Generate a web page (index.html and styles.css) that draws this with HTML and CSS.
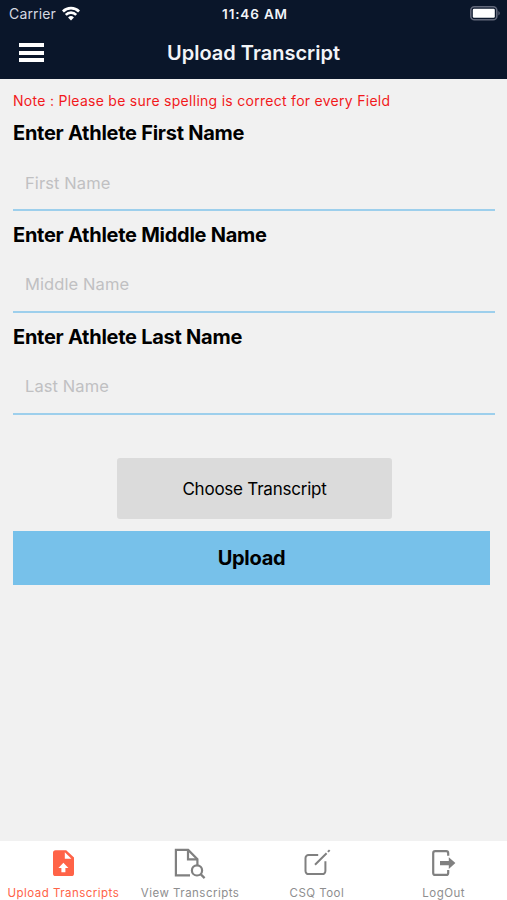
FILE: index.html
```
<!DOCTYPE html>
<html lang="en">
<head>
    <meta charset="UTF-8">
    <meta name="viewport" content="width=device-width, initial-scale=1.0">
    <title>Upload Transcript</title>
    <link rel="stylesheet" href="styles.css">
</head>
<body>
    <header>
        <div class="status-bar">
            <div class="carrier">
                <span>Carrier</span>
                <svg width="18" height="15" viewBox="0 0 19 15" fill="none" stroke="#fff" stroke-width="2.8">
                    <path d="M1 5.4a12 12 0 0 1 17 0"/>
                    <path d="M4 8.9a7.8 7.8 0 0 1 11 0"/>
                    <path d="M9.5 14.8L6.4 11.6a4.4 4.4 0 0 1 6.2 0z" fill="#fff" stroke="none"/>
                </svg>
            </div>
            <span class="time">11:46 AM</span>
            <svg class="battery" width="31" height="15" viewBox="0 0 31 15">
                <rect x=".8" y=".8" width="26" height="13" rx="3.6" fill="none" stroke="#62687a" stroke-width="1.6"/>
                <rect x="2.8" y="2.8" width="22" height="9" rx="1.2" fill="#fff"/>
                <path d="M28.4 5v4.6a2.6 2.6 0 0 0 0-4.6z" fill="#62687a"/>
            </svg>
        </div>
        <div class="nav-bar">
            <button class="menu" aria-label="Menu"><i></i><i></i><i></i></button>
            <h1>Upload Transcript</h1>
        </div>
    </header>

    <main>
        <p class="note">Note : Please be sure spelling is correct for every Field</p>

        <div class="field">
            <label for="first">Enter Athlete First Name</label>
            <input type="text" id="first" placeholder="First Name">
        </div>
        <div class="field">
            <label for="middle">Enter Athlete Middle Name</label>
            <input type="text" id="middle" placeholder="Middle Name">
        </div>
        <div class="field">
            <label for="last">Enter Athlete Last Name</label>
            <input type="text" id="last" placeholder="Last Name">
        </div>

        <button class="choose">Choose Transcript</button>
        <button class="upload">Upload</button>
    </main>

    <nav class="tabs">
        <a class="tab active">
            <svg width="32" height="32" viewBox="0 0 32 32">
                <path d="M8.6 3.2h10.6l7.8 7.4v15.8a2.6 2.6 0 0 1-2.6 2.6H8.6A2.6 2.6 0 0 1 6 26.4V5.8a2.6 2.6 0 0 1 2.6-2.6z" fill="#ff6347"/>
                <path d="M17.8 5.3v6.4h6.6z" fill="#fff"/>
                <path d="M16.4 15.8l5 5.2h-3v4.2h-4V21h-3z" fill="#fff"/>
            </svg>
            <span>Upload Transcripts</span>
        </a>
        <a class="tab">
            <svg width="32" height="32" viewBox="0 0 32 32" fill="none" stroke="#808080" stroke-width="2.2">
                <path d="M16 28.4H1.9V2.9h12.3l9.2 9.3V18"/>
                <path d="M14 3v9.4h9.4"/>
                <circle cx="23" cy="23.4" r="5.1"/>
                <path d="M26.6 27.1l4 4"/>
            </svg>
            <span>View Transcripts</span>
        </a>
        <a class="tab">
            <svg width="32" height="32" viewBox="0 0 32 32" fill="none" stroke="#808080" stroke-width="2">
                <path d="M17.2 8H7.5a3 3 0 0 0-3 3v13.1a3 3 0 0 0 3 3h13.9a3 3 0 0 0 3-3V14.2"/>
                <path d="M14 17.8L25.6 6.2M26.9 4.9l1.8-1.8"/>
            </svg>
            <span>CSQ Tool</span>
        </a>
        <a class="tab">
            <svg width="32" height="32" viewBox="0 0 32 32">
                <path d="M20.2 8.8V6.2a2 2 0 0 0-2-2H7.2a2 2 0 0 0-2 2v19.7a2 2 0 0 0 2 2h11a2 2 0 0 0 2-2v-2.8" fill="none" stroke="#808080" stroke-width="2.2"/>
                <path d="M12 13.9h8.8v-3.6l6.6 5.8-6.6 5.8v-3.6H12z" fill="#808080"/>
            </svg>
            <span>LogOut</span>
        </a>
    </nav>
</body>
</html>
```

FILE: styles.css
```
* {
    box-sizing: border-box;
}
body {
    margin: 0;
    height: 100vh;
    display: flex;
    flex-direction: column;
    background: #f1f1f1;
    font-family: Inter, "Liberation Sans", sans-serif;
    overflow: hidden;
}
header {
    height: 79px;
    background: #0a162a;
    color: #f2f4f8;
}
.status-bar {
    display: grid;
    grid-template-columns: 1fr auto 1fr;
    align-items: center;
    height: 27px;
    padding: 0 6px 0 9px;
    font-size: 14px;
}
.carrier {
    display: flex;
    align-items: center;
    gap: 6px;
    color: #d5d9e1;
    letter-spacing: 0.15px;
}
.time {
    font-weight: 600;
    font-size: 13.5px;
    letter-spacing: 0.85px;
}
.battery {
    justify-self: end;
}
.nav-bar {
    display: grid;
    grid-template-columns: 1fr auto 1fr;
    align-items: center;
    height: 51px;
    padding: 0 19px;
}
.menu {
    display: flex;
    flex-direction: column;
    gap: 3.5px;
    width: 25px;
    padding: 0;
    border: none;
    background: none;
}
.menu i {
    width: 25px;
    height: 4px;
    background: #fff;
}
h1 {
    margin: 0;
    font-size: 20px;
    font-weight: 600;
    line-height: 24px;
}
main {
    flex: 1;
    display: flex;
    flex-direction: column;
    padding: 12px 12px 0 13px;
}
.note {
    margin: 0 0 9px;
    color: #f2191c;
    font-size: 14px;
    line-height: 20px;
    letter-spacing: 0.28px;
}
.field {
    height: 101.8px;
}
.field label {
    display: block;
    font-size: 20px;
    font-weight: 700;
    line-height: 26px;
    letter-spacing: -0.26px;
}
.field input {
    display: block;
    width: 100%;
    height: 65px;
    padding: 10px 12px 0;
    border: none;
    border-bottom: 2px solid #9dcfec;
    background: none;
    font-family: inherit;
    font-size: 16.5px;
    letter-spacing: 0.1px;
    outline: none;
}
.field input::placeholder {
    color: #c0c0c2;
}
button {
    border: none;
    font-family: inherit;
    color: #000;
}
.choose {
    width: 275px;
    height: 61px;
    margin: 33px auto 12px 104px;
    border-radius: 3px;
    background: #dbdbdb;
    font-size: 17px;
    letter-spacing: -0.22px;
}
.upload {
    height: 54px;
    margin-right: 5px;
    background: #77c1ea;
    font-size: 20px;
    font-weight: 700;
    letter-spacing: -0.3px;
}
.tabs {
    display: grid;
    grid-template-columns: repeat(4, 1fr);
    height: 59px;
    background: #fff;
}
.tab {
    display: flex;
    flex-direction: column;
    align-items: center;
    padding-top: 6px;
    color: #8e8e8f;
    font-size: 11.5px;
    line-height: 16px;
    letter-spacing: 0.48px;
    white-space: nowrap;
}
.tab span {
    margin-top: 6px;
}
.tab.active {
    color: #ff6347;
}
```
